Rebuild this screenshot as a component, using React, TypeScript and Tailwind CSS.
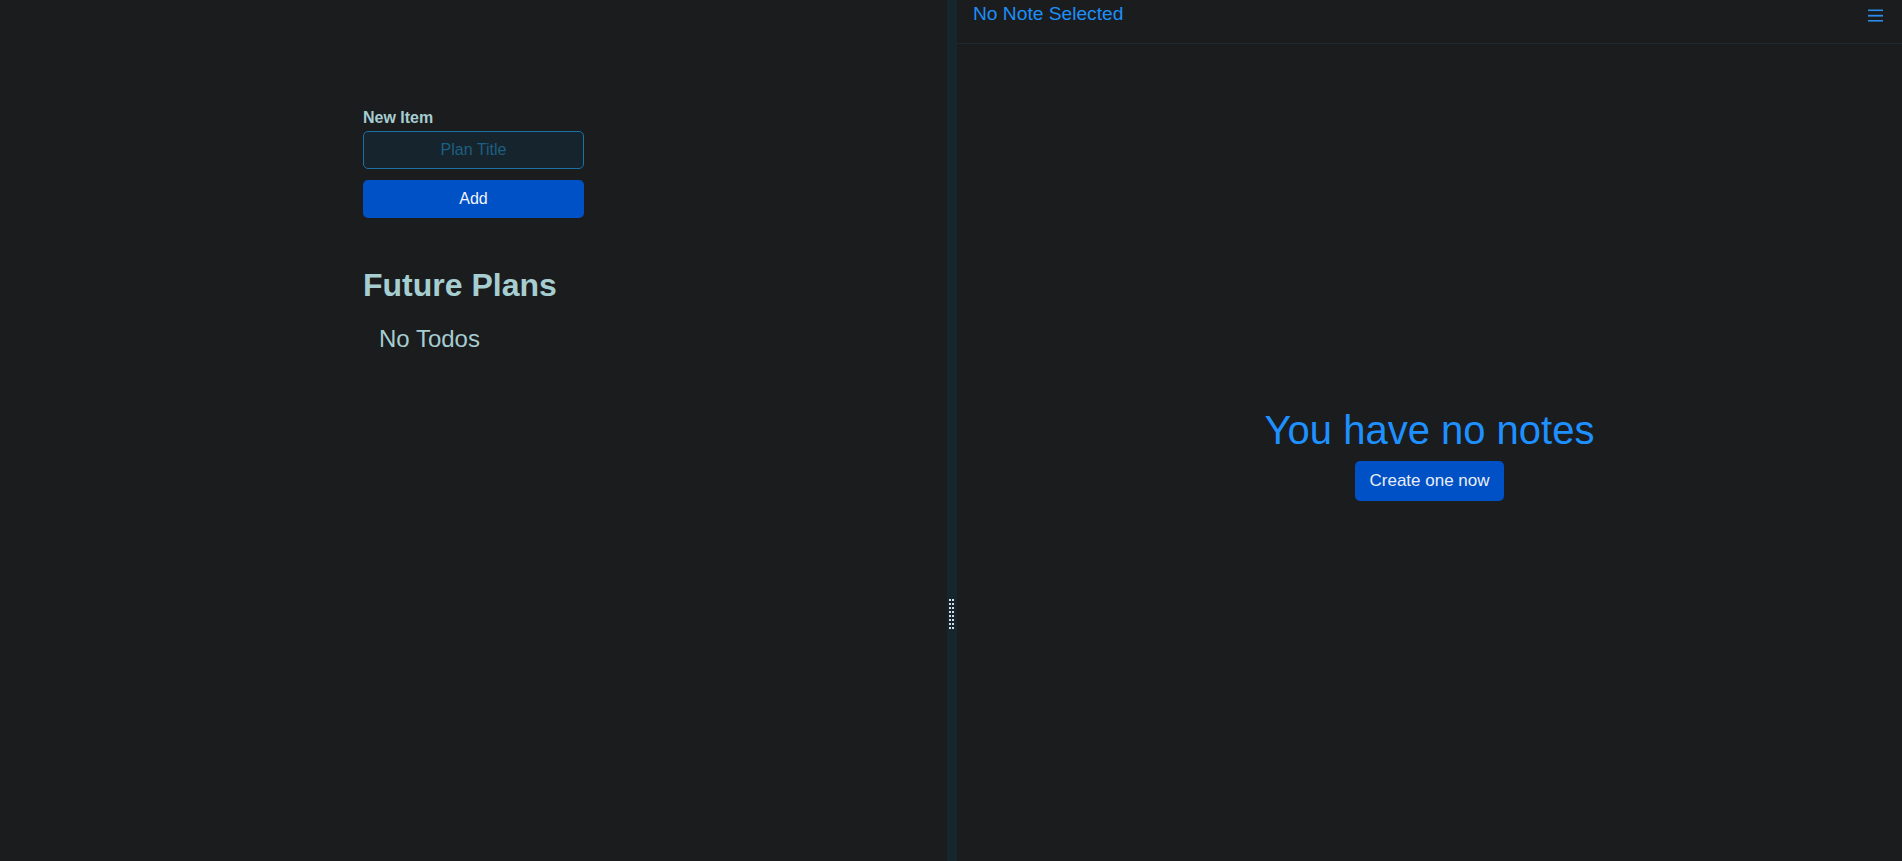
import { useState } from 'react'

const font = { fontFamily: '"Liberation Sans", Arial, sans-serif' }

function Grip() {
  return (
    <div className="grid grid-cols-2 gap-x-[1px] gap-y-[2px]">
      {Array.from({ length: 16 }).map((_, i) => (
        <div key={i} className="w-[2px] h-[2px] bg-[#d4dde2]" />
      ))}
    </div>
  )
}

export default function App() {
  const [title, setTitle] = useState('')
  const [todos, setTodos] = useState<string[]>([])

  return (
    <div className="w-full h-screen flex bg-[#1b1c1e] overflow-hidden" style={font}>
      {/* todo pane */}
      <div className="w-[947px] shrink-0 flex justify-center">
        <div className="w-[221px] pt-[109px]">
          <label className="block text-[16px] font-bold leading-[18px] text-[#a6cdd0] mb-[4px]">New Item</label>
          <input
            value={title}
            onChange={(e) => setTitle(e.target.value)}
            placeholder="Plan Title"
            className="w-full h-[38px] rounded-[5px] border border-[#1a72a4] bg-[#16242d] text-center text-[16px] text-[#a6cdd0] placeholder:text-[#1d5f82] outline-none"
          />
          <button
            onClick={() => {
              if (title.trim()) setTodos([...todos, title.trim()])
              setTitle('')
            }}
            className="mt-[11px] w-full h-[38px] rounded-[5px] bg-[#0050c6] text-[16px] text-[#f2f5fa]"
          >
            Add
          </button>

          <h1 className="mt-[49px] text-[32px] font-bold leading-[37px] text-[#a6cdd0]">Future Plans</h1>
          <div className="mt-[22px] pl-[16px] text-[24px] leading-[26px] text-[#a6cdd0]">
            {todos.length === 0 ? 'No Todos' : todos.map((t, i) => <div key={i}>{t}</div>)}
          </div>
        </div>
      </div>

      {/* resizer */}
      <div className="w-[10px] shrink-0 bg-[#15262f] relative">
        <div className="absolute left-[2px] top-[599px]">
          <Grip />
        </div>
      </div>

      {/* notes pane */}
      <div className="flex-1 flex flex-col">
        <div className="h-[44px] shrink-0 border-b border-[#1c2a30] flex items-start justify-between pl-[16px] pr-[19px] pt-[3px]">
          <span className="text-[19.2px] leading-[22px] text-[#1e8ff8]">No Note Selected</span>
          <svg width="15" height="13" viewBox="0 0 15 13" className="mt-[6px]">
            <rect x="0" y="0.5" width="15" height="1.6" fill="#2a8ce8" />
            <rect x="0" y="5.8" width="15" height="1.8" fill="#2a8ce8" />
            <rect x="0" y="11" width="15" height="1.6" fill="#2a8ce8" />
          </svg>
        </div>
        <div className="flex-1 flex flex-col items-center justify-center">
          <div className="text-[40px] leading-[50px] text-[#1e90ff]">You have no notes</div>
          <button className="mt-[6px] h-[40px] px-[14px] rounded-[5px] bg-[#0050c6] text-[17px] text-[#e9eef6]">
            Create one now
          </button>
        </div>
      </div>
    </div>
  )
}
